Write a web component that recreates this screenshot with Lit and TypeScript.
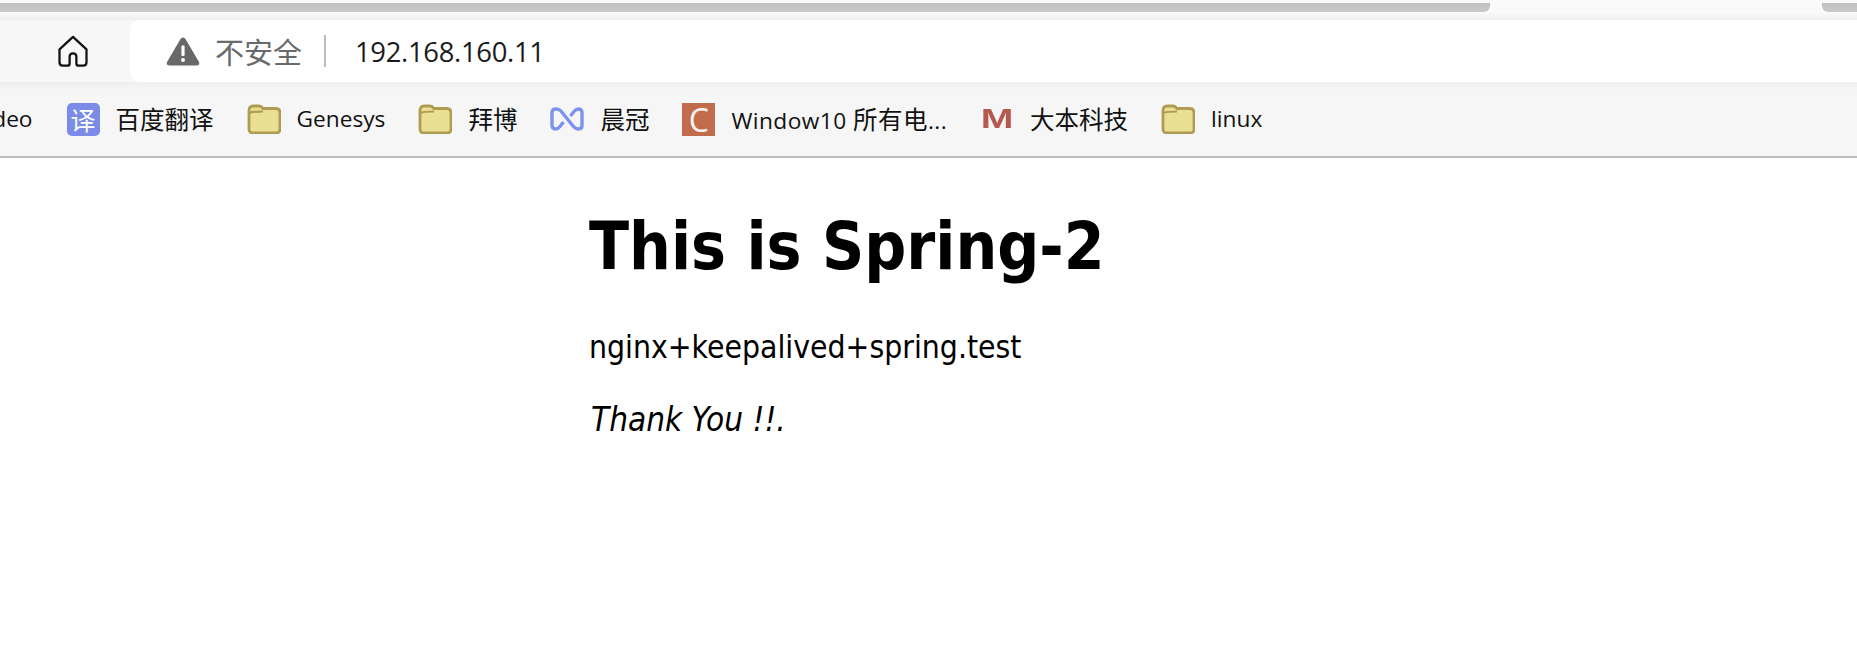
import { LitElement, html, css, svg } from "lit";
import { customElement } from "lit/decorators.js";

const folder = svg`<svg class="ico" viewBox="0 0 34 30"><path d="M2 6.500C2 3.500 3.500 2 6 2h6c2 0 3 1 4 2.500h12.500C31 4.500 33 6 33 9v16c0 2.500-1.500 4-4 4H6c-2.500 0-4-1.500-4-4z" fill="#eae094" stroke="#ae9c50" stroke-width="2.800"/><path d="M2 9c3-1.500 9-1.500 14-1.500" fill="none" stroke="#ae9c50" stroke-width="2.200"/></svg>`;
const knot = svg`<svg class="ico" viewBox="0 0 34 30"><path d="M10.500 6.500 L23.500 22.500 Q25.500 25 28.500 25 Q32 25 32 21.500 V8.500 Q32 5 28.500 5 Q26 5 24 7.500 L20.500 12 M13.500 18 L10 22.500 Q8 25 5.500 25 Q2 25 2 21.500 V8.500 Q2 5 5.500 5 Q8.500 5 10.500 6.500" fill="none" stroke="#7c93ee" stroke-width="3.400"/></svg>`;

@customElement("app-root")
export class AppRoot extends LitElement {
  static styles = css`
    :host { display: block; width: 1857px; height: 652px; background: #fff; overflow: hidden; font-family: "Open Sans", "Noto Sans CJK SC", sans-serif; color: #111; }
    .tabs { height: 20px; box-sizing: border-box; padding-top: 3px; display: flex; background: linear-gradient(#fafafa, #fafafa 60%, #eeeeee); }
    .tab { height: 9px; background: linear-gradient(#c0c0c0, #c9c9c9); }
    .tab.a { width: 1490px; border-bottom-right-radius: 6px; }
    .tab.b { width: 35px; margin-left: auto; border-bottom-left-radius: 6px; }
    .toolbar { height: 62px; display: flex; align-items: stretch; background: #f7f7f7; }
    .home { width: 130px; display: flex; justify-content: flex-start; align-items: center; padding-left: 55px; box-sizing: border-box; }
    .home svg { width: 36px; height: 36px; }
    .addr { flex: 1; background: #fff; border-radius: 10px 0 0 10px; display: flex; align-items: center; padding-left: 36px; }
    .warn { width: 34px; height: 30px; margin-right: 15px; }
    .insecure { font-size: 29px; color: #6a6a6a; font-family: "Noto Sans CJK SC", sans-serif; line-height: 34px; width: 88px; white-space: nowrap; }
    .sep { width: 2px; height: 32px; background: #bdbdbd; margin: 0 29px 0 21px; }
    .ip { font-size: 27.400px; color: #1a1a1a; font-family: "Open Sans", sans-serif; letter-spacing: -0.300px; }
    .marks { height: 76px; box-sizing: border-box; display: flex; align-items: center; gap: 33px; background: linear-gradient(#eeeeee, #f6f6f6 8px); border-bottom: 2px solid #bdbdbd; overflow: hidden; white-space: nowrap; font-size: 22.700px; }
    .mark { display: flex; align-items: center; gap: 16px; flex: none; }
    .mark > span:last-child { margin-top: -2px; }
    .mark.clip { margin-left: -27px; margin-right: 1px; }
    .cjk { font-family: "Noto Sans CJK SC", sans-serif; font-size: 24.500px; }
    .wide { letter-spacing: 0.450px; }
    .ico { width: 34px; height: 30px; flex: none; display: block; }
    .yi { width: 33px; height: 33px; border-radius: 5px; background: #7a8ce8; color: #fff; display: flex; align-items: center; justify-content: center; font-size: 25px; font-family: "Noto Sans CJK SC", sans-serif; flex: none; }
    .c { width: 33px; height: 33px; background: #c16c4d; color: #fbf3ef; display: flex; align-items: center; justify-content: center; font-size: 32px; font-family: "Open Sans", sans-serif; flex: none; }
    .m { width: 34px; height: 33px; color: #b5584f; display: flex; align-items: center; justify-content: center; font-size: 28px; font-weight: 700; font-family: "Liberation Sans", sans-serif; flex: none; filter: blur(0.500px); transform: scaleX(1.400); }
    .page { padding: 0 0 0 589px; font-family: "DejaVu Sans Condensed", "DejaVu Sans", sans-serif; color: #000; }
    h1 { margin: 0; padding-top: 49px; font-size: 65.300px; line-height: 78px; font-weight: 700; white-space: nowrap; }
    p { margin: 0; line-height: 40px; white-space: nowrap; }
    p.one { margin-top: 42px; font-size: 31.600px; }
    p.two { margin-top: 32.500px; font-size: 33px; font-style: italic; padding-left: 2px; }
  `;

  render() {
    return html`
      <div class="tabs"><div class="tab a"></div><div class="tab b"></div></div>
      <div class="toolbar">
        <div class="home">
          <svg viewBox="0 0 32 32" fill="none" stroke="#111" stroke-width="2" stroke-linejoin="round" stroke-linecap="round">
            <path d="M16 3.500 L4 14.500 V26 Q4 29 7 29 H11 Q13 29 13 27 V21 Q13 18 16 18 Q19 18 19 21 V27 Q19 29 21 29 H25 Q28 29 28 26 V14.500 Z"/>
          </svg>
        </div>
        <div class="addr">
          <svg class="warn" viewBox="0 0 34 30"><path d="M17 1.500 Q18.500 1.500 19.500 3 L33 26 Q34 29 31 29.500 H3 Q0 29 1 26 L14.500 3 Q15.500 1.500 17 1.500Z" fill="#696969"/><rect x="15.400" y="9.500" width="3.200" height="10.500" rx="1" fill="#fff"/><circle cx="17" cy="24" r="2" fill="#fff"/></svg>
          <span class="insecure">不安全</span>
          <span class="sep"></span>
          <span class="ip">192.168.160.11</span>
        </div>
      </div>
      <div class="marks">
        <div class="mark clip"><span>Video</span></div>
        <div class="mark"><span class="yi">译</span><span class="cjk">百度翻译</span></div>
        <div class="mark">${folder}<span>Genesys</span></div>
        <div class="mark">${folder}<span class="cjk">拜博</span></div>
        <div class="mark">${knot}<span class="cjk">晨冠</span></div>
        <div class="mark"><span class="c">C</span><span class="wide">Window10 <span class="cjk">所有电</span>...</span></div>
        <div class="mark"><span class="m">M</span><span class="cjk">大本科技</span></div>
        <div class="mark">${folder}<span>linux</span></div>
      </div>
      <main class="page">
        <h1>This is Spring-2</h1>
        <p class="one">nginx+keepalived+spring.test</p>
        <p class="two">Thank You !!.</p>
      </main>
    `;
  }
}
